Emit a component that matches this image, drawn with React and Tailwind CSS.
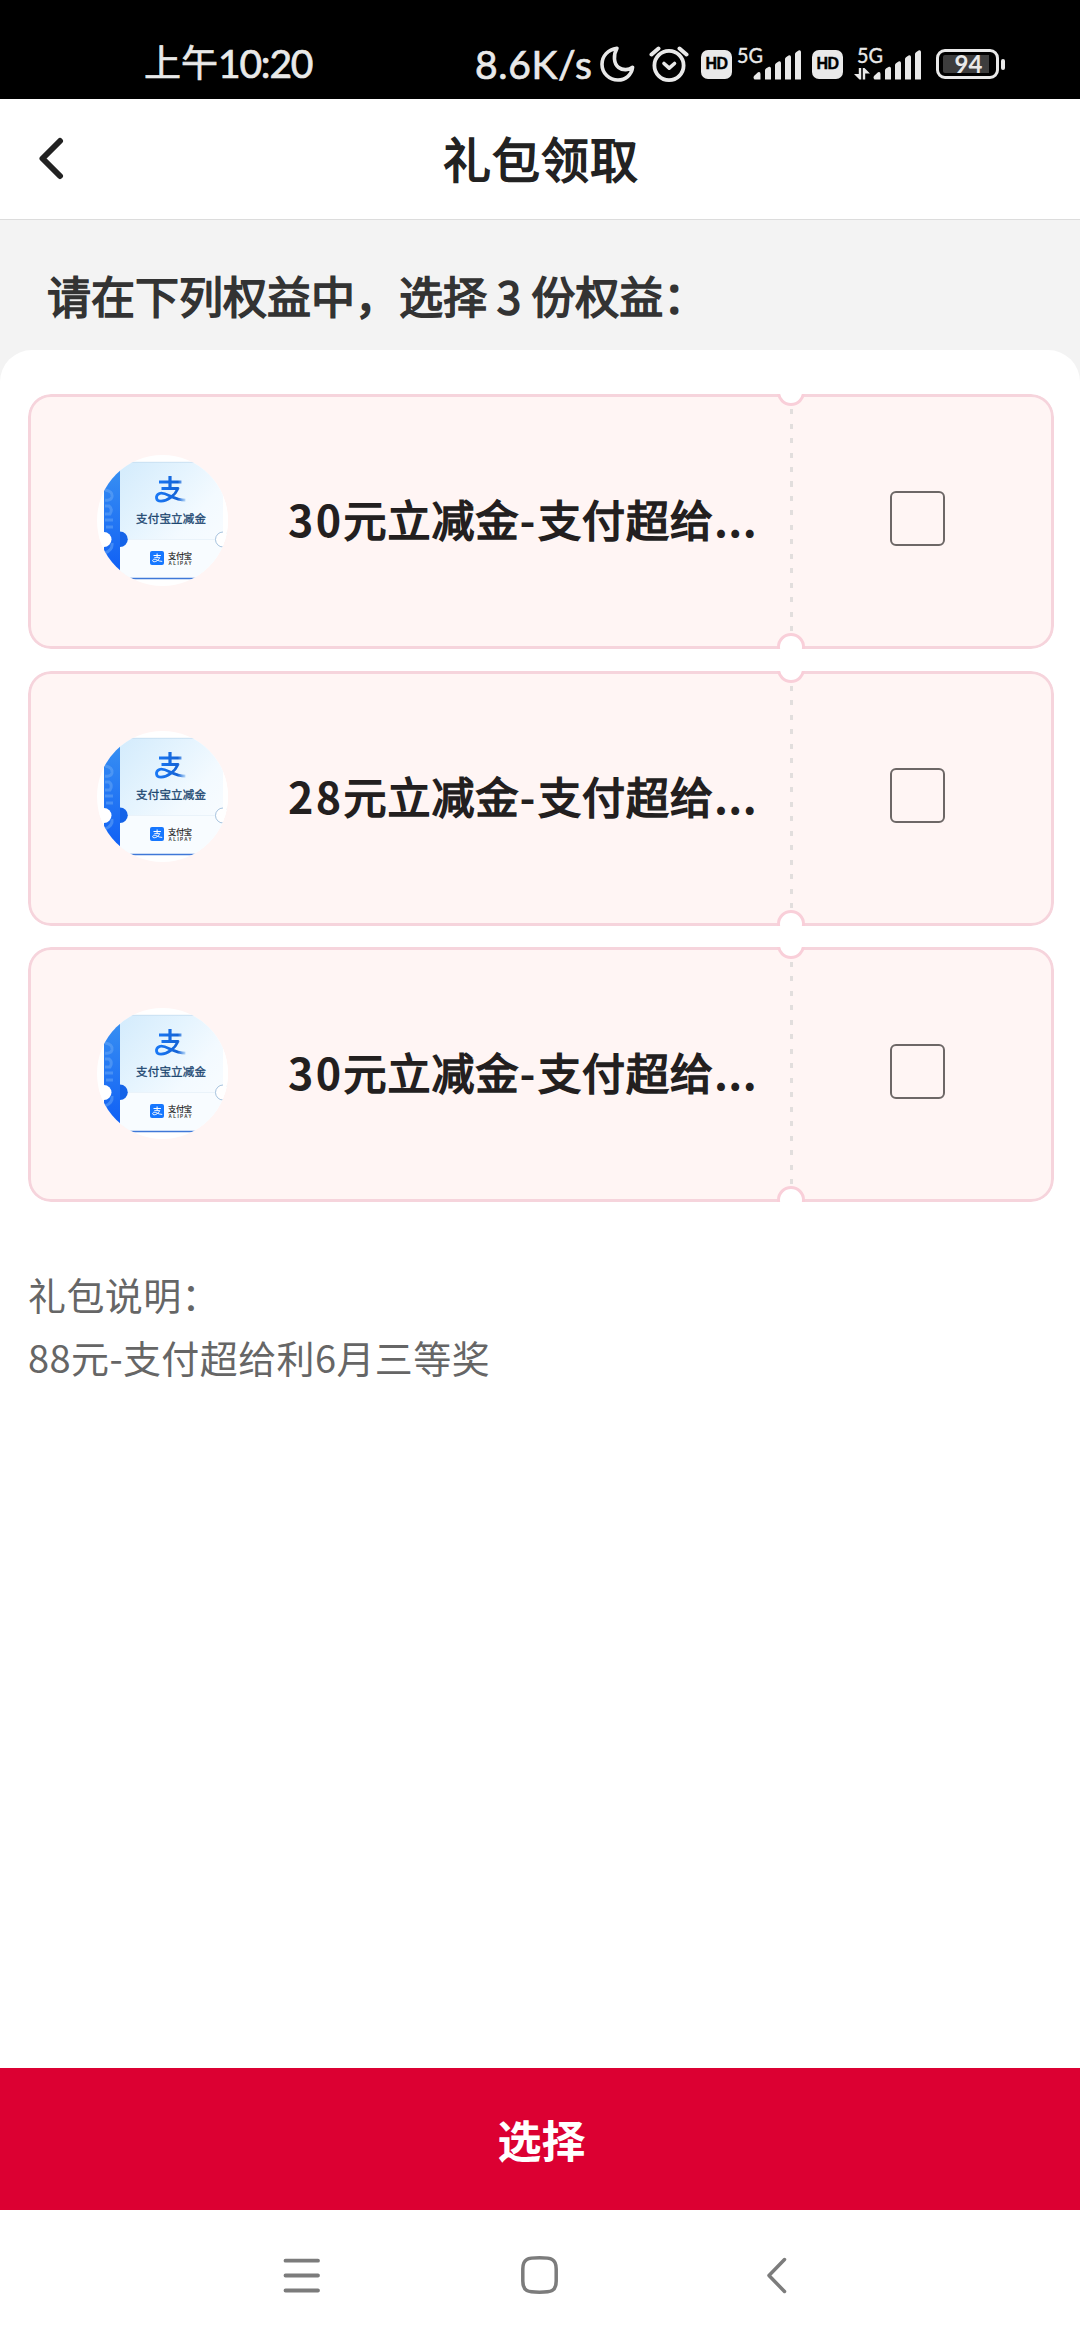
import React from "react";

const items = [
  { id: 1, amount: "30" },
  { id: 2, amount: "28" },
  { id: 3, amount: "30" },
];

function MoonIcon() {
  return (
    <svg className="ml-[7px] h-9 w-[35px] shrink-0" viewBox="0 0 35 36" fill="none">
      <path d="M17 2.200C8 3.500 2 10 2 18.200C2 27.300 9.300 34 18 34C25.500 34 31.500 29 32.600 21.300C29 24 23 24.800 18.600 21.500C13.500 17.500 13.200 9 17 2.200Z" stroke="#e9e9e9" strokeWidth="3.600" strokeLinejoin="round" />
    </svg>
  );
}

function AlarmIcon() {
  return (
    <svg className="ml-[14px] h-9 w-10 shrink-0" viewBox="0 0 40 36" fill="none" stroke="#e9e9e9" strokeLinecap="round" strokeLinejoin="round">
      <circle cx="20" cy="19.500" r="14.600" strokeWidth="3.800" />
      <path d="M2.500 8.500L9.500 2.500M37.500 8.500L30.500 2.500" strokeWidth="4" />
      <path d="M15 17.500L20.200 22.200L25.500 17.500" strokeWidth="3.600" />
    </svg>
  );
}

function HdBadge() {
  return (
    <span className="flex h-[29px] w-[31px] shrink-0 items-center justify-center rounded-[7px] bg-[#e9e9e9] font-['Liberation_Sans',sans-serif] text-[16px] leading-none font-bold tracking-[-0.5px] text-black [-webkit-text-stroke:0.4px_#000]">
      HD
    </span>
  );
}

function Signal({ arrows }) {
  return (
    <svg className="h-9 w-[68px] shrink-0 overflow-visible" viewBox="0 0 68 36" fill="#e9e9e9">
      <text x="3" y="17" fontFamily="Lato, sans-serif" fontSize="21" textLength="26" lengthAdjust="spacingAndGlyphs" stroke="#e9e9e9" strokeWidth="0.400">5G</text>
      <path d="M20.500 29.500L24 26.300Q26.500 25.500 26.500 28V33.500H20.500Q18.500 31.500 20.500 29.500Z" />
      <path d="M31 24.500Q31 23 32.300 22.300L35 20.800Q37 20.500 37 22.500V33.500H31Z" />
      <path d="M41 19Q41 17.800 42.300 17L45 15.300Q47 15 47 17V33.500H41Z" />
      <path d="M51 13Q51 11.800 52.300 11L55 9.300Q57 9 57 11V33.500H51Z" />
      <path d="M61 8Q61 6.800 62.300 6L65 4.300Q67 4 67 6V33.500H61Z" />
      {arrows && (
        <path d="M4.800 22H7.200V33.500H5.500L0 28H4.800ZM8.800 22H10.500L16 27.500H11.200V33.500H8.800Z" />
      )}
    </svg>
  );
}

function Battery() {
  return (
    <div className="ml-[14px] flex shrink-0 items-center gap-[2px]">
      <div className="flex h-[30px] w-[63px] items-center justify-center rounded-[9px] border-[3.5px] border-[#e9e9e9] bg-black">
        <div className="flex h-[18px] w-[49px] items-center justify-center rounded-[2px] bg-[linear-gradient(to_right,#3d3d3d_94%,#000_94%)] pl-[2px] font-['Lato',sans-serif] text-[24px] leading-none font-bold text-[#e9e9e9]">
          94
        </div>
      </div>
      <div className="h-[11px] w-1 rounded-[2px] bg-[#e9e9e9]" />
    </div>
  );
}

function StatusBar() {
  return (
    <div className="flex h-[99px] items-start bg-black pt-[46px] text-[#e9e9e9] [-webkit-text-stroke:0.7px_#e9e9e9]">
      <div className="ml-[144px] flex h-9 w-[171px] shrink-0 items-center pb-[2px] font-['Lato','Noto_Sans_CJK_SC',sans-serif] text-[37px] leading-9 whitespace-nowrap">
        <span>上午</span>
        <span className="text-[39px] tracking-[-1.2px]">10:20</span>
      </div>
      <div className="ml-[160px] flex h-9 w-[118px] shrink-0 items-center font-['Lato',sans-serif] text-[39px] leading-9 tracking-[0.7px] whitespace-nowrap">
        8.6K/s
      </div>
      <div className="flex h-9 items-center [-webkit-text-stroke:0]">
        <MoonIcon />
        <AlarmIcon />
        <div className="ml-3"><HdBadge /></div>
        <div className="ml-[2px]"><Signal /></div>
        <div className="ml-[10px]"><HdBadge /></div>
        <div className="ml-[11px]"><Signal arrows /></div>
        <Battery />
      </div>
    </div>
  );
}

function AlipayMark({ color }) {
  return (
    <g fill="none" stroke={color} strokeLinecap="butt" strokeLinejoin="round">
      <path d="M4.500 7.500H27M15.500 1.500V14" strokeWidth="3.200" />
      <path d="M7 14H23.500C20.500 21 13 26.700 6.500 26.700C1 26.700 0.500 21 5 19C11 16.500 18 25.500 31 25.600" strokeWidth="2.800" />
    </g>
  );
}

function CouponPicture() {
  return (
    <svg className="mb-[3px] h-[131px] w-[131px] shrink-0 rounded-full bg-white" viewBox="0 0 131 131">
      <defs>
        <linearGradient id="body" x1="0" y1="0" x2="1" y2="1">
          <stop offset="0" stopColor="#d3ebfc" />
          <stop offset="0.350" stopColor="#e5f4fe" />
          <stop offset="0.600" stopColor="#f3faff" />
          <stop offset="1" stopColor="#fbfdff" />
        </linearGradient>
        <linearGradient id="strip" x1="0" y1="0" x2="0" y2="1">
          <stop offset="0" stopColor="#3a92f2" />
          <stop offset="1" stopColor="#0d5cf5" />
        </linearGradient>
        <linearGradient id="mark" gradientUnits="userSpaceOnUse" x1="0" y1="0" x2="31" y2="0">
          <stop offset="0" stopColor="#1a7af8" />
          <stop offset="0.750" stopColor="#1463d6" />
          <stop offset="1" stopColor="#b9dafa" />
        </linearGradient>
      </defs>
      <rect x="23" y="7" width="103" height="117" fill="url(#body)" />
      <rect x="23" y="84" width="103" height="39" fill="#f8fcff" />
      <rect x="7" y="7" width="16" height="117" fill="url(#strip)" />
      <g fill="none" stroke="#6ba9f6" strokeWidth="3" opacity="0.500">
        <path d="M8 35Q16 36 15 42Q14 46 8 45M8 51H12Q16 54 13 59H8M8 65H16M9 72H16M8 98Q16 95 15 88" />
      </g>
      <path d="M23 76.500A7.700 7.700 0 0 1 23 92Z" fill="#1463e8" />
      <circle cx="7" cy="84.500" r="7.500" fill="#fff" />
      <circle cx="126" cy="84.500" r="7.500" fill="#fff" stroke="#8fb3d4" strokeWidth="0.800" />
      <rect x="126" y="5" width="6" height="121" fill="#fff" />
      <path d="M31 84.500H118" stroke="#e6f0f9" strokeWidth="0.800" />
      <path d="M33 123.500H99" stroke="#3f78d8" strokeWidth="1.500" />
      <path d="M34 7.300H98" stroke="#c5dcf0" strokeWidth="0.800" />
      <g transform="translate(57.500 19.500)"><AlipayMark color="url(#mark)" /></g>
      <text x="39" y="67.500" fontFamily="'Noto Sans CJK SC', sans-serif" fontSize="11.500" textLength="70" fill="#1c4771" stroke="#1c4771" strokeWidth="0.300">支付宝立减金</text>
      <rect x="53" y="96" width="14" height="14" rx="2" fill="#1677ff" />
      <g transform="translate(55 98) scale(0.330)"><AlipayMark color="#fff" /></g>
      <text x="71" y="103.500" fontFamily="'Noto Sans CJK SC', sans-serif" fontSize="8.200" textLength="24" fill="#222" stroke="#222" strokeWidth="0.200">支付宝</text>
      <text x="71.500" y="109.500" fontFamily="'Liberation Sans', sans-serif" fontSize="4.500" fontWeight="700" textLength="23" fill="#333">ALIPAY</text>
    </svg>
  );
}

function CouponCard({ item }) {
  return (
    <div className="relative h-[255px] w-[1026px] overflow-hidden rounded-[23px]">
      <div className="flex h-full items-center rounded-[23px] border-[3px] border-[#f6d4dc] bg-[#fff5f4] pl-[66px]">
        <CouponPicture />
        <div className="ml-[60px] w-[501px] shrink-0 pb-[7px] text-[43px] leading-[64px] tracking-[1px] whitespace-nowrap text-[#231f1f]">
          <span className="font-bold tracking-[2.4px]">{item.amount}</span>
          <span className="[-webkit-text-stroke:1.7px_#231f1f]">元立减金</span>
          <span className="font-bold tracking-[2.5px]">-</span>
          <span className="[-webkit-text-stroke:1.7px_#231f1f]">支付超给</span>
          <span className="font-bold tracking-[0.4px]">...</span>
        </div>
        <div className="ml-px h-[225px] w-[3px] shrink-0 bg-[repeating-linear-gradient(to_bottom,#e2dedd_0px,#e2dedd_5px,transparent_5px,transparent_14.5px)]" />
        <div className="mb-[6px] ml-[97px] h-[55px] w-[55px] shrink-0 rounded-[6px] border-2 border-[#6d6766]" />
      </div>
      <div className="absolute -top-[16px] left-[749px] h-7 w-7 rounded-full border-[3px] border-[#f9cfd9] bg-white" />
      <div className="absolute -bottom-[12px] left-[749px] h-7 w-7 rounded-full border-[3px] border-[#f9cfd9] bg-white" />
    </div>
  );
}

export default function App() {
  return (
    <div className="flex h-[2340px] w-[1080px] flex-col overflow-hidden bg-white font-['Noto_Sans_CJK_SC',sans-serif]">
      <StatusBar />
      <header className="grid h-[121px] grid-cols-[100px_1fr_100px] items-center border-b border-[#dcdcdc] bg-white">
        <svg className="ml-[38px] h-[44px] w-[28px]" viewBox="0 0 28 44" fill="none">
          <path d="M22 4L4.500 21.500L22 39" stroke="#222" strokeWidth="6" strokeLinecap="round" strokeLinejoin="round" />
        </svg>
        <h1 className="pb-[5px] pl-[2px] text-center text-[48px] leading-[60px] tracking-[1px] text-[#222] [-webkit-text-stroke:1.6px_#222]">礼包领取</h1>
      </header>
      <main className="flex flex-1 flex-col bg-[#f3f3f3]">
        <h2 className="flex h-[130px] items-center pt-[20px] pl-[47px] text-[44px] leading-[64px] whitespace-pre text-[#333] [-webkit-text-stroke:1.6px_#333]">
          请在下列权益中，选择 3 份权益：
        </h2>
        <section className="flex-1 rounded-t-[32px] bg-white px-7 pt-[44px]">
          <div className="flex flex-col gap-[21.500px]">
            {items.map((item) => (
              <CouponCard key={item.id} item={item} />
            ))}
          </div>
          <div className="mt-[60px] text-[38px] leading-[63px] tracking-[0.4px] text-[#666]">
            <p>礼包说明：</p>
            <p>88元-支付超给利6月三等奖</p>
          </div>
        </section>
      </main>
      <button className="h-[142px] bg-[#dc0032] pl-[3px] text-[44px] leading-[64px] font-bold text-white">选择</button>
      <nav className="flex h-[130px] items-center justify-center gap-[200px] bg-white">
        <svg className="h-10 w-10" viewBox="-2.500 0 40 40" fill="none" stroke="#7c7c7c" strokeWidth="3.800" strokeLinecap="round">
          <path d="M3 5.700H35.500M3 20.500H35.500M3 35.500H35.500" />
        </svg>
        <svg className="h-10 w-10" viewBox="0 0 40 40" fill="none" stroke="#7c7c7c" strokeWidth="3.500">
          <path d="M19.500 2.800C31 2.800 36.200 3.500 36.200 14V26C36.200 36.500 31 37.200 19.500 37.200C8 37.200 2.800 36.500 2.800 26V14C2.800 3.500 8 2.800 19.500 2.800Z" />
        </svg>
        <svg className="h-10 w-10" viewBox="0 0 40 40" fill="none" stroke="#7c7c7c" strokeWidth="3.500" strokeLinecap="round" strokeLinejoin="round">
          <path d="M24.500 4.500L9 20.500L24.500 36.500" />
        </svg>
      </nav>
    </div>
  );
}
